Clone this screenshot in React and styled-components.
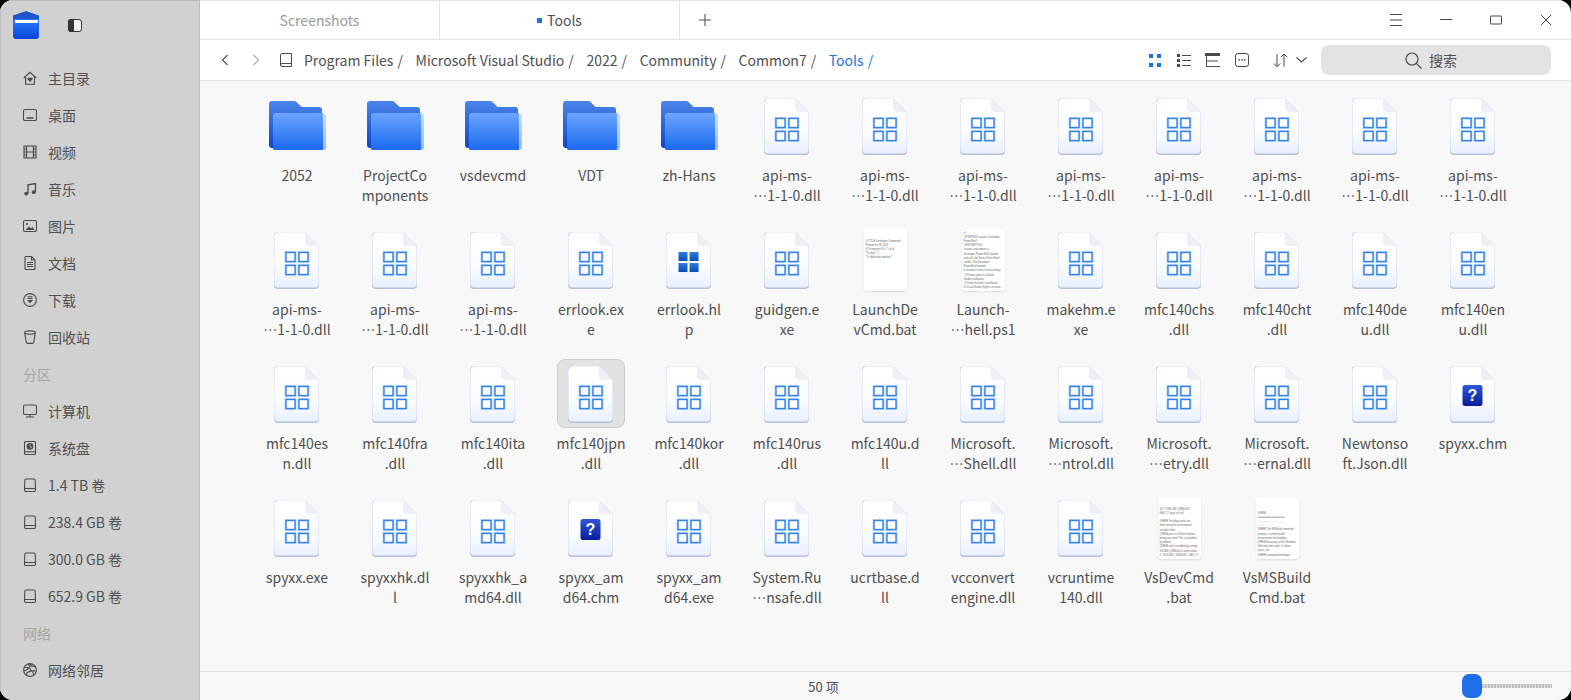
import React from 'react';
import styled, { createGlobalStyle } from 'styled-components';

const GlobalStyle = createGlobalStyle`
  html, body {
    margin: 0;
    padding: 0;
    background: #000;
    overflow: hidden;
  }
  body {
    font-family: "Noto Sans CJK SC", "Noto Sans", sans-serif;
  }
`;

const Window = styled.div`
  display: flex;
  width: 1571px;
  height: 700px;
  border-radius: 13px;
  overflow: hidden;
  background: #fff;
`;

const Sidebar = styled.aside`
  flex: none;
  width: 200px;
  height: 100%;
  box-sizing: border-box;
  background: #d1d1d1;
  border-top: 1px solid #b9b9b9;
  border-left: 1px solid #bdbdbd;
  border-right: 1px solid #bcbcbc;
`;

const SideTop = styled.div`
  display: flex;
  align-items: center;
  height: 48px;
  padding-left: 11px;
  margin-bottom: 10px;
`;

const ToggleButton = styled.span`
  display: flex;
  margin-left: 28px;
`;

const NavList = styled.nav`
  display: flex;
  flex-direction: column;
`;

const NavRow = styled.div`
  display: flex;
  align-items: center;
  height: 37px;
  padding-left: 22px;
  gap: 11px;
  font-size: 14px;
  color: #4f4f4f;
`;

const NavHeading = styled.div`
  display: flex;
  align-items: center;
  height: 37px;
  padding-left: 22px;
  font-size: 14px;
  color: #a4a4a4;
`;

const Main = styled.main`
  flex: 1;
  min-width: 0;
  display: flex;
  flex-direction: column;
`;

const TabBar = styled.div`
  flex: none;
  display: flex;
  align-items: stretch;
  box-sizing: border-box;
  height: 40px;
  border-top: 1px solid #e6e6e6;
  border-bottom: 1px solid #e4e4e4;
`;

const Tab = styled.div`
  display: flex;
  align-items: center;
  justify-content: center;
  gap: 5px;
  width: 240px;
  box-sizing: border-box;
  border-right: 1px solid #e6e6e6;
  font-size: 14px;
  color: ${p => (p.$active ? '#4f4f4f' : '#9b9b9b')};
`;

const TabDot = styled.i`
  width: 5px;
  height: 5px;
  background: #1f6fe8;
`;

const AddTab = styled.span`
  display: flex;
  align-items: center;
  justify-content: center;
  width: 50px;
`;

const WindowButtons = styled.div`
  display: flex;
  margin-left: auto;
`;

const WindowButton = styled.span`
  display: flex;
  align-items: center;
  justify-content: center;
  width: 50px;
`;

const Toolbar = styled.div`
  flex: none;
  display: flex;
  align-items: center;
  box-sizing: border-box;
  height: 41px;
  padding: 0 20px 0 9px;
  border-bottom: 1px solid #e3e3e3;
`;

const NavButton = styled.span`
  display: flex;
  align-items: center;
  justify-content: center;
  width: 31px;
`;

const BookIcon = styled.span`
  display: flex;
  margin: 0 12px 0 9px;
`;

const Crumbs = styled.div`
  display: flex;
  align-items: center;
  font-size: 14px;
  color: #4f4f4f;
`;

const Crumb = styled.span`
  color: ${p => (p.$current ? '#1f6fe8' : 'inherit')};
  &::after {
    content: '/';
    margin: 0 12.6px 0 4px;
  }
`;

const ViewIcons = styled.div`
  display: flex;
  align-items: center;
  margin-left: auto;
`;

const ViewButton = styled.span`
  display: flex;
  align-items: center;
  justify-content: center;
  width: 29px;
`;

const SortButton = styled.span`
  display: flex;
  align-items: center;
  gap: 8px;
  margin: 0 14px 0 17px;
`;

const SearchBox = styled.div`
  display: flex;
  align-items: center;
  justify-content: center;
  gap: 7px;
  box-sizing: border-box;
  width: 230px;
  height: 30px;
  padding-right: 10px;
  border-radius: 8px;
  background: #e3e3e3;
  font-size: 14px;
  color: #4f4f4f;
`;

const Content = styled.div`
  flex: 1;
  min-height: 0;
  overflow: hidden;
  background: #f8f8f8;
  padding: 10px 0 0 48px;
`;

const FileGrid = styled.div`
  display: grid;
  grid-template-columns: repeat(13, 98px);
  grid-auto-rows: 134px;
`;

const FileItem = styled.div`
  display: flex;
  flex-direction: column;
  align-items: center;
`;

const Tile = styled.div`
  display: flex;
  align-items: center;
  justify-content: center;
  box-sizing: border-box;
  width: 68px;
  height: 69px;
  margin-bottom: 5px;
  border-radius: 8px;
  border: 1px solid ${p => (p.$selected ? '#cdcdcd' : 'transparent')};
  background: ${p => (p.$selected ? '#e2e2e2' : 'transparent')};
`;

const FileName = styled.div`
  width: 98px;
  text-align: center;
  font-size: 14px;
  line-height: 20px;
  color: #4f4f4f;
  white-space: pre-line;
`;

const SheetSvg = styled.svg`
  margin: 2px 1px 0 0;
`;

const FolderSvg = styled.svg`
  margin-left: 1px;
`;

const Thumb = styled.div`
  box-sizing: border-box;
  width: 43px;
  height: 62px;
  padding: ${p => p.$top}px 0 0 2px;
  border-radius: 3px;
  background: #fff;
  box-shadow: 0 1px 2px rgba(0, 0, 0, 0.12);
  font-family: "Liberation Sans", sans-serif;
  font-size: 2.6px;
  line-height: 4.2px;
  color: #666;
  white-space: pre;
`;

const StatusBar = styled.footer`
  flex: none;
  display: flex;
  align-items: center;
  height: 29px;
  box-sizing: border-box;
  border-top: 1px solid #e2e2e2;
  background: #f8f8f8;
`;

const ItemCount = styled.div`
  flex: 1;
  text-align: center;
  padding-right: 15px;
  font-size: 13px;
  color: #4f4f4f;
`;

const Slider = styled.div`
  flex: none;
  display: flex;
  align-items: center;
  width: 109px;
  height: 100%;
`;

const SliderThumb = styled.span`
  flex: none;
  width: 20px;
  height: 24px;
  border-radius: 7px;
  background: #1f6fe8;
  box-shadow: -1px 0 0 -9px #1f6fe8;
`;

const SliderTrack = styled.span`
  flex: none;
  width: 70px;
  height: 4px;
  background: repeating-linear-gradient(90deg, #bcbcbc 0 2px, #e4e4e4 2px 3px);
`;

const DARK = '#4a4a4a';

const Line = ({ size = 14, children, sw = 1.1, color = DARK, height }) => (
  <svg width={size} height={height || size} viewBox={`0 0 ${size} ${height || size}`} fill="none" stroke={color} strokeWidth={sw}>
    {children}
  </svg>
);

const sideIcons = {
  home: (
    <Line>
      <path d="M.8 7 7 1.3 13.2 7M2.6 5.6v7.6h8.8V5.6" />
      <path d="M7 11 4.6 8.6a1.3 1.3 0 0 1 2.4-1.4 1.3 1.3 0 0 1 2.4 1.4z" fill={DARK} stroke="none" />
    </Line>
  ),
  desktop: (
    <Line>
      <rect x=".5" y="1.5" width="13" height="11" rx="1.6" />
      <path d="M3.5 10h7" strokeWidth="1.6" />
    </Line>
  ),
  film: (
    <Line>
      <rect x="1" y="1" width="12" height="12" />
      <path d="M3.6 1v12M10.4 1v12M1 4h2.6M1 7h2.6M1 10h2.6M10.4 4H13M10.4 7H13M10.4 10H13M3.6 7h6.8" />
    </Line>
  ),
  music: (
    <Line sw={1.3}>
      <path d="M5 11.5V2.8l7.5-1.3v8.6" />
      <circle cx="3.2" cy="11.6" r="1.9" fill={DARK} stroke="none" />
      <circle cx="10.7" cy="10.2" r="1.9" fill={DARK} stroke="none" />
    </Line>
  ),
  image: (
    <Line>
      <rect x=".5" y="1.5" width="13" height="11" rx="1.6" />
      <circle cx="4" cy="5" r="1.1" fill={DARK} stroke="none" />
      <path d="M2.5 11 6 7.5l2 2 1.5-1.5 2 3z" fill={DARK} stroke="none" />
    </Line>
  ),
  doc: (
    <Line>
      <path d="M2 1.5a1 1 0 0 1 1-1h5.5L12 4v8.5a1 1 0 0 1-1 1H3a1 1 0 0 1-1-1z" />
      <path d="M8.5.5V4H12M4 6.5h6M4 8.5h6M4 10.5h6" />
    </Line>
  ),
  download: (
    <Line>
      <circle cx="7" cy="7" r="6.4" />
      <path d="M4.5 3.8h5M4.5 5.5h5" />
      <path d="M3.8 7h6.4L7 10.2z" fill={DARK} stroke="none" />
    </Line>
  ),
  trash: (
    <Line>
      <ellipse cx="7" cy="2.6" rx="5.3" ry="1.7" />
      <path d="M1.7 2.8 3.2 12a1.5 1.5 0 0 0 1.5 1.4h4.6a1.5 1.5 0 0 0 1.5-1.4l1.5-9.2" />
    </Line>
  ),
  computer: (
    <Line>
      <rect x=".5" y="1" width="13" height="9.5" rx="1.6" />
      <path d="M7 10.5v2M3 13h8" />
    </Line>
  ),
  system: (
    <Line>
      <rect x="1.5" y=".5" width="11" height="13" rx="1.2" />
      <circle cx="7" cy="5.4" r="3.3" fill={DARK} stroke="none" />
      <path d="M7 5.4V3M7 5.4l2 1.4" stroke="#d1d1d1" strokeWidth=".8" />
      <path d="M1.5 10.8h11" />
    </Line>
  ),
  drive: (
    <Line>
      <path d="M3 1h8a1.2 1.2 0 0 1 1.2 1.2L12.5 12a1.4 1.4 0 0 1-1.4 1.5H2.9A1.4 1.4 0 0 1 1.5 12l.3-9.8A1.2 1.2 0 0 1 3 1z" />
      <path d="M1.6 10.5h10.8" />
    </Line>
  ),
  network: (
    <Line>
      <circle cx="7" cy="7" r="6.4" />
      <path d="M1.5 4.2C5 4 9 6 11 12M4.5 1.3C8 3 10 3.5 12.5 4M1 8c2.5-.5 5-2.5 7-7M3 12c1-3 3.5-4.5 9.5-4" />
    </Line>
  )
};

const LogoIcon = () => (
  <svg width="28" height="28" viewBox="0 0 28 28">
    <defs>
      <linearGradient id="logoBody" x1="0" y1="0" x2="0" y2="1">
        <stop offset="0" stopColor="#2b86ff" />
        <stop offset="1" stopColor="#0a44dc" />
      </linearGradient>
    </defs>
    <path d="M1 6a2 2 0 0 1 2-2h22a2 2 0 0 1 2 2v19a3 3 0 0 1-3 3H4a3 3 0 0 1-3-3z" fill="url(#logoBody)" />
    <path d="M1 4.5 14 0l13 4.5V8H1z" fill="#1f55cf" />
    <rect x="3" y="9" width="23" height="3" fill="#fff" />
  </svg>
);

const FolderIcon = () => (
  <FolderSvg width="57" height="49" viewBox="0 0 57 49">
    <defs>
      <linearGradient id="folderFront" x1="0" y1="0" x2="0" y2="1">
        <stop offset="0" stopColor="#6ba6ff" />
        <stop offset="1" stopColor="#1b69f0" />
      </linearGradient>
      <linearGradient id="folderBack" x1="0" y1="0" x2="0" y2="1">
        <stop offset="0" stopColor="#4b84ea" />
        <stop offset="1" stopColor="#0c47c6" />
      </linearGradient>
      <linearGradient id="folderEdge" x1="0" y1="0" x2="0" y2="1">
        <stop offset="0" stopColor="#cfe1ff" />
        <stop offset="1" stopColor="#8fbbfb" />
      </linearGradient>
    </defs>
    <path d="M3 0h22a4 4 0 0 1 3 1.4L31.5 5a3 3 0 0 0 2 1H50a3 3 0 0 1 3 3v38H3a3 3 0 0 1-3-3V3a3 3 0 0 1 3-3z" fill="url(#folderBack)" />
    <path d="M8 12h46a3 3 0 0 1 3 3v31a3 3 0 0 1-3 3H6a3 3 0 0 1-2-1V16a4 4 0 0 1 4-4z" fill="url(#folderEdge)" />
    <path d="M8 12h45a1 1 0 0 1 1 1v35a1 1 0 0 1-1 1H6a3 3 0 0 1-2-1V16a4 4 0 0 1 4-4z" fill="url(#folderFront)" />
  </FolderSvg>
);

const cells = [
  [0, 0],
  [13, 0],
  [0, 13],
  [13, 13]
];

const FileSheet = ({ children }) => (
  <SheetSvg width="45" height="57" viewBox="0 0 45 57">
    <defs>
      <linearGradient id="sheetBody" x1="0" y1="0" x2="0" y2="1">
        <stop offset="0" stopColor="#ffffff" />
        <stop offset=".6" stopColor="#fbfcff" />
        <stop offset="1" stopColor="#e9f0ff" />
      </linearGradient>
    </defs>
    <path d="M4 0h27l14 14v39a4 4 0 0 1-4 4H4a4 4 0 0 1-4-4V4a4 4 0 0 1 4-4z" fill="#b3c0de" />
    <path d="M4.5.3H31L44.7 14v37.5a4 4 0 0 1-4 4H4.3a4 4 0 0 1-4-4V4.5a4 4 0 0 1 4.2-4.2z" fill="url(#sheetBody)" />
    <path d="M31 0l14 14H35a4 4 0 0 1-4-4z" fill="#eef0f5" />
    {children}
  </SheetSvg>
);

const DllIcon = () => (
  <FileSheet>
    {cells.map(([x, y]) => (
      <g key={`${x}-${y}`}>
        <rect x={11.5 + x} y={20 + y} width="10" height="10" fill="#fff" stroke="#a9caf6" strokeWidth="1.6" />
        <rect x={12 + x} y={20.5 + y} width="9" height="9" fill="#fff" stroke="#3282ea" strokeWidth="1.4" />
      </g>
    ))}
  </FileSheet>
);

const WinIcon = () => (
  <FileSheet>
    <defs>
      <linearGradient id="winPane" x1="0" y1="0" x2="0" y2="1">
        <stop offset="0" stopColor="#2a7fdc" />
        <stop offset="1" stopColor="#0a4db4" />
      </linearGradient>
    </defs>
    {cells.map(([x, y]) => (
      <rect key={`${x}-${y}`} x={12.5 + x * 0.85} y={20 + y * 0.85} width="9" height="9" fill="url(#winPane)" />
    ))}
  </FileSheet>
);

const HelpIcon = () => (
  <FileSheet>
    <defs>
      <linearGradient id="helpBox" x1="0" y1="0" x2="0" y2="1">
        <stop offset="0" stopColor="#2c57d6" />
        <stop offset="1" stopColor="#0b1c9c" />
      </linearGradient>
    </defs>
    <rect x="12.5" y="19" width="20" height="21" rx="2.5" fill="url(#helpBox)" />
    <text x="22.5" y="35" textAnchor="middle" fontFamily="Liberation Sans, sans-serif" fontWeight="700" fontSize="16" fill="#fff">
      ?
    </text>
  </FileSheet>
);

const thumbs = {
  launchDev: {
    top: 11,
    text: '@TITLE Developer Command\nPrompt for VS 2022\n@%comspec% /k ""cd /d\n"%~dp0..\\..\\"\n"%~dp0vsdevcmd.bat""'
  },
  launchPs: {
    top: 3,
    text: '<#\n.SYNOPSIS Locates Developer\nPowerShell\n.DESCRIPTION\nLocates and imports a\nDeveloper PowerShell module\nand calls the Enter-VsDevShell\ncmdlet. The Developer\nPowerShell module\nis located in one of several ways:\n 1) From a path in a Visual\nStudio installation\n 2) From the latest installation\nof Visual Studio (higher versions'
  },
  vsDev: {
    top: 11,
    text: '@if "%VSCMD_DEBUG%"\nGEQ "3" goto ech off\n\n@REM Test/diag works on\nwhen living the environment\nvariable looks\n@REM prior to VsDevCmd.bat\nbeing executed. This is disabled\nby default\n@REM and is enabled by setting\nVSCMD_DEBUG to some value.\nif "%VSCMD_DEBUG%" GEQ "3"'
  },
  vsBuild: {
    top: 15,
    text: '@REM\n==================\n- - - - - - - - - - - - - - - - - -\n- - - - -\n@REM The MSBuild command\nprompt is used for build\nenvironment that bundles\n@REM discovery of the Windows\nSdk and other tools. In these\ncases, the\n@REM command developer'
  }
};

const FileIcon = ({ kind }) => {
  if (kind === 'folder') return <FolderIcon />;
  if (kind === 'win') return <WinIcon />;
  if (kind === 'help') return <HelpIcon />;
  if (thumbs[kind]) return <Thumb $top={thumbs[kind].top}>{thumbs[kind].text}</Thumb>;
  return <DllIcon />;
};

const API = 'api-ms-\n…1-1-0.dll';

const files = [
  ['2052', 'folder'],
  ['ProjectCo\nmponents', 'folder'],
  ['vsdevcmd', 'folder'],
  ['VDT', 'folder'],
  ['zh-Hans', 'folder'],
  [API], [API], [API], [API], [API], [API], [API], [API],
  [API], [API], [API],
  ['errlook.ex\ne'],
  ['errlook.hl\np', 'win'],
  ['guidgen.e\nxe'],
  ['LaunchDe\nvCmd.bat', 'launchDev'],
  ['Launch-\n…hell.ps1', 'launchPs'],
  ['makehm.e\nxe'],
  ['mfc140chs\n.dll'],
  ['mfc140cht\n.dll'],
  ['mfc140de\nu.dll'],
  ['mfc140en\nu.dll'],
  ['mfc140es\nn.dll'],
  ['mfc140fra\n.dll'],
  ['mfc140ita\n.dll'],
  ['mfc140jpn\n.dll', 'dll', true],
  ['mfc140kor\n.dll'],
  ['mfc140rus\n.dll'],
  ['mfc140u.d\nll'],
  ['Microsoft.\n…Shell.dll'],
  ['Microsoft.\n…ntrol.dll'],
  ['Microsoft.\n…etry.dll'],
  ['Microsoft.\n…ernal.dll'],
  ['Newtonso\nft.Json.dll'],
  ['spyxx.chm', 'help'],
  ['spyxx.exe'],
  ['spyxxhk.dl\nl'],
  ['spyxxhk_a\nmd64.dll'],
  ['spyxx_am\nd64.chm', 'help'],
  ['spyxx_am\nd64.exe'],
  ['System.Ru\n…nsafe.dll'],
  ['ucrtbase.d\nll'],
  ['vcconvert\nengine.dll'],
  ['vcruntime\n140.dll'],
  ['VsDevCmd\n.bat', 'vsDev'],
  ['VsMSBuild\nCmd.bat', 'vsBuild']
];

const places = [
  ['主目录', 'home'],
  ['桌面', 'desktop'],
  ['视频', 'film'],
  ['音乐', 'music'],
  ['图片', 'image'],
  ['文档', 'doc'],
  ['下载', 'download'],
  ['回收站', 'trash'],
  ['分区'],
  ['计算机', 'computer'],
  ['系统盘', 'system'],
  ['1.4 TB 卷', 'drive'],
  ['238.4 GB 卷', 'drive'],
  ['300.0 GB 卷', 'drive'],
  ['652.9 GB 卷', 'drive'],
  ['网络'],
  ['网络邻居', 'network']
];

const crumbs = ['Program Files', 'Microsoft Visual Studio', '2022', 'Community', 'Common7'];

export default function App() {
  return (
    <>
      <GlobalStyle />
      <Window lang="zh-CN">
        <Sidebar>
          <SideTop>
            <LogoIcon />
            <ToggleButton>
              <svg width="14" height="13" viewBox="0 0 14 13">
                <rect x=".5" y=".5" width="13" height="12" rx="2.5" fill="#f2f2f2" stroke="#333" />
                <path d="M3 0h3v13H3a3 3 0 0 1-3-3V3a3 3 0 0 1 3-3z" fill="#333" />
              </svg>
            </ToggleButton>
          </SideTop>
          <NavList>
            {places.map(([label, icon]) =>
              icon ? (
                <NavRow key={label}>
                  {sideIcons[icon]}
                  <span>{label}</span>
                </NavRow>
              ) : (
                <NavHeading key={label}>{label}</NavHeading>
              )
            )}
          </NavList>
        </Sidebar>
        <Main>
          <TabBar>
            <Tab>Screenshots</Tab>
            <Tab $active>
              <TabDot />
              Tools
            </Tab>
            <AddTab>
              <Line color="#555">
                <path d="M7 1v12M1 7h12" />
              </Line>
            </AddTab>
            <WindowButtons>
              <WindowButton>
                <Line size={12} sw={1}>
                  <path d="M0 .5h12M0 6h12M0 11.5h12" />
                </Line>
              </WindowButton>
              <WindowButton>
                <Line size={12} sw={1}>
                  <path d="M0 5.5h12" />
                </Line>
              </WindowButton>
              <WindowButton>
                <Line size={12} sw={1}>
                  <rect x=".5" y="2" width="11" height="8" rx=".5" />
                </Line>
              </WindowButton>
              <WindowButton>
                <Line size={12} sw={1}>
                  <path d="M1 1l10 10M11 1 1 11" />
                </Line>
              </WindowButton>
            </WindowButtons>
          </TabBar>
          <Toolbar>
            <NavButton>
              <Line size={12} sw={1.1}>
                <path d="M8.5 1 3.5 6l5 5" />
              </Line>
            </NavButton>
            <NavButton>
              <Line size={12} sw={1.1} color="#a6a6a6">
                <path d="M3.5 1l5 5-5 5" />
              </Line>
            </NavButton>
            <BookIcon>
              <Line size={12} height={14} sw={1}>
                <path d="M2 .5h9.5v13H2A1.5 1.5 0 0 1 .5 12V2A1.5 1.5 0 0 1 2 .5zM.5 12A1.5 1.5 0 0 1 2 10.5h9.5" />
              </Line>
            </BookIcon>
            <Crumbs>
              {crumbs.map(c => (
                <Crumb key={c}>{c}</Crumb>
              ))}
              <Crumb $current>Tools</Crumb>
            </Crumbs>
            <ViewIcons>
              <ViewButton>
                <svg width="12" height="13" viewBox="0 0 12 13" fill="#1f6fe8">
                  <rect width="4" height="4" />
                  <rect x="8" width="4" height="4" />
                  <rect y="9" width="4" height="4" />
                  <rect x="8" y="9" width="4" height="4" />
                </svg>
              </ViewButton>
              <ViewButton>
                <Line size={14} height={13} sw={1}>
                  <path d="M5 1.5h9M5 6.5h9M5 11.5h9" />
                  <path d="M0 0h3v3H0zM0 5h3v3H0zM0 10h3v3H0z" fill={DARK} stroke="none" />
                </Line>
              </ViewButton>
              <ViewButton>
                <Line size={15} height={14} sw={1}>
                  <path d="M0 0h15v3H0z" fill={DARK} stroke="none" />
                  <path d="M1.5 3v10.5H15M1.5 8H13" />
                </Line>
              </ViewButton>
              <ViewButton>
                <Line size={14} sw={1}>
                  <rect x=".5" y=".5" width="13" height="13" rx="2.5" />
                  <path d="M3.5 6H5v1.5H3.5zM6.3 6h1.5v1.5H6.3zM9 6h1.5v1.5H9z" fill={DARK} stroke="none" />
                </Line>
              </ViewButton>
            </ViewIcons>
            <SortButton>
              <Line size={15} sw={1}>
                <path d="M4 1v12.5M.8 10.5 4 13.7l3.2-3.2M11 13.5V1M7.8 4.2 11 1l3.2 3.2" />
              </Line>
              <Line size={11} height={6} sw={1.1}>
                <path d="M.5.5 5.5 5l5-4.5" />
              </Line>
            </SortButton>
            <SearchBox>
              <Line size={17} sw={1.2}>
                <circle cx="7" cy="7" r="6" />
                <path d="M11.3 11.3 16.5 16.5" />
              </Line>
              搜索
            </SearchBox>
          </Toolbar>
          <Content>
            <FileGrid>
              {files.map(([name, kind, selected], i) => (
                <FileItem key={i}>
                  <Tile $selected={selected}>
                    <FileIcon kind={kind} />
                  </Tile>
                  <FileName>{name}</FileName>
                </FileItem>
              ))}
            </FileGrid>
          </Content>
          <StatusBar>
            <ItemCount>50 项</ItemCount>
            <Slider>
              <SliderThumb />
              <SliderTrack />
            </Slider>
          </StatusBar>
        </Main>
      </Window>
    </>
  );
}
